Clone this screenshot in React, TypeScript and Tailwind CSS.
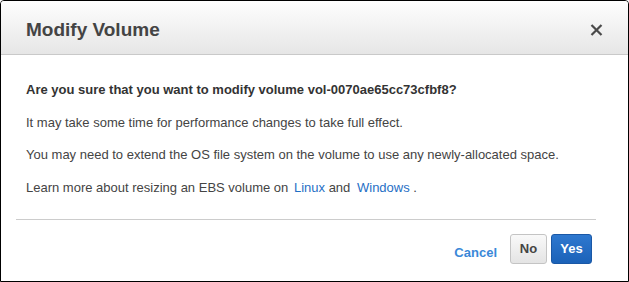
import React from 'react';

const CloseIcon: React.FC = () => (
  <svg width="13" height="12" viewBox="0 0 13 12" className="block">
    <path d="M1.5 1 L11.5 11 M11.5 1 L1.5 11" stroke="#4a4a4a" strokeWidth="2.2" strokeLinecap="butt" />
  </svg>
);

const App: React.FC = () => {
  return (
    <div className="w-[629px] h-[282px] bg-white font-['Liberation_Sans',Arial,sans-serif]">
      <div className="w-full h-full flex flex-col border border-black rounded-t-[4px] overflow-hidden bg-white">
        {/* Header */}
        <div className="h-[54px] shrink-0 flex items-center justify-between pl-[25px] pr-[25px] bg-gradient-to-b from-[#fefefe] to-[#e6e6e6] border-b border-[#c9c9c9]">
          <h1 className="text-[19px] font-bold text-[#444] pt-[4px] leading-none">Modify Volume</h1>
          <button className="pt-[5px]">
            <CloseIcon />
          </button>
        </div>

        {/* Body */}
        <div className="flex-1 flex flex-col pl-[15px] pr-[32px]">
          <div className="flex flex-col gap-[12.5px] pt-[25px] pl-[10px] text-[13px] leading-[20px] text-[#444]">
            <p className="font-bold text-[#333]">Are you sure that you want to modify volume vol-0070ae65cc73cfbf8?</p>
            <p>It may take some time for performance changes to take full effect.</p>
            <p>You may need to extend the OS file system on the volume to use any newly-allocated space.</p>
            <p>
              Learn more about resizing an EBS volume on{' '}
              <a className="pl-[2px] text-[#1f6fc5]">Linux</a> and{' '}
              <a className="pl-[3px] text-[#1f6fc5]">Windows</a> .
            </p>
          </div>

          {/* Footer */}
          <div className="mt-[21px] border-t border-[#cccccc] flex justify-end items-center pt-[14px] pr-[4px] gap-[4px]">
            <a className="text-[13px] font-bold text-[#3a88d8] pt-[8px] mr-[9px]">Cancel</a>
            <button className="h-[30px] w-[37px] rounded-[3px] border border-[#c4c4c4] bg-gradient-to-b from-[#f9f9f9] to-[#e4e4e4] text-[13px] font-bold text-[#444]">
              No
            </button>
            <button className="h-[30px] w-[41px] rounded-[3px] border border-[#1a58a6] bg-gradient-to-b from-[#2e78cf] to-[#1b62b8] text-[13px] font-bold text-white">
              Yes
            </button>
          </div>
        </div>
      </div>
    </div>
  );
};

export default App;
